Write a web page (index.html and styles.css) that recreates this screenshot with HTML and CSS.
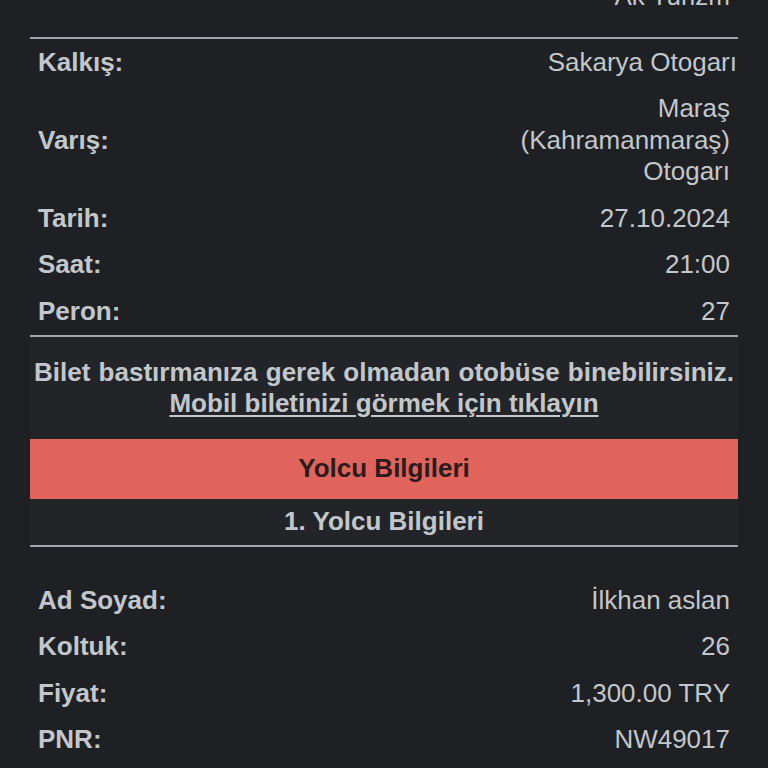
FILE: index.html
```html
<!DOCTYPE html>
<html lang="tr">
<head>
<meta charset="utf-8">
<title>Bilet</title>
<link rel="stylesheet" href="styles.css">
</head>
<body>
<div class="wrap">
  <div class="row row-top">
    <span class="label"></span>
    <span class="value">Ak Turizm</span>
  </div>
  <hr class="rule rule-first">
  <div class="row">
    <span class="label">Kalkış:</span>
    <span class="value value-wide">Sakarya Otogarı</span>
  </div>
  <div class="row">
    <span class="label">Varış:</span>
    <span class="value value-narrow">Maraş (Kahramanmaraş) Otogarı</span>
  </div>
  <div class="row">
    <span class="label">Tarih:</span>
    <span class="value">27.10.2024</span>
  </div>
  <div class="row">
    <span class="label">Saat:</span>
    <span class="value">21:00</span>
  </div>
  <div class="row">
    <span class="label">Peron:</span>
    <span class="value">27</span>
  </div>
  <hr class="rule">
  <div class="panel">
    <div class="notice">
      <p class="notice-text">Bilet bastırmanıza gerek olmadan otobüse binebilirsiniz.</p>
      <a class="notice-link" href="#">Mobil biletinizi görmek için tıklayın</a>
    </div>
    <div class="banner">Yolcu Bilgileri</div>
    <div class="subhead">1. Yolcu Bilgileri</div>
  </div>
  <hr class="rule">
  <div class="passenger">
    <div class="row">
      <span class="label">Ad Soyad:</span>
      <span class="value">İlkhan aslan</span>
    </div>
    <div class="row">
      <span class="label">Koltuk:</span>
      <span class="value">26</span>
    </div>
    <div class="row">
      <span class="label">Fiyat:</span>
      <span class="value">1,300.00 TRY</span>
    </div>
    <div class="row">
      <span class="label">PNR:</span>
      <span class="value">NW49017</span>
    </div>
  </div>
</div>
</body>
</html>
```

FILE: styles.css
```css
html, body {
  margin: 0;
  padding: 0;
  background: #1f2023;
}

body {
  font-family: "Liberation Sans", Arial, sans-serif;
  font-size: 26px;
  line-height: 31.5px;
  color: #c2c7cb;
  overflow: hidden;
  height: 768px;
}

.wrap {
  padding: 0 30px;
}

.row {
  display: flex;
  justify-content: space-between;
  align-items: center;
  padding: 7.5px 8px;
}

.row-top {
  margin-top: -26.5px;
}

.label {
  font-weight: bold;
  white-space: nowrap;
}

.value {
  text-align: right;
}

.value-wide {
  margin-right: -7px;
}

.value-narrow {
  max-width: 220px;
}

.rule {
  border: 0;
  height: 2px;
  margin: 0;
  background: #a2a6aa;
}

.rule-first {
  margin-top: 17px;
}

.panel {
  background: #232428;
}

.notice {
  padding: 20px 0 19px;
  text-align: center;
  font-weight: bold;
}

.notice-text {
  margin: 0;
  word-spacing: 1px;
}

.notice-link {
  color: #c2c7cb;
  text-decoration: underline;
  text-underline-offset: 3px;
  text-decoration-thickness: 2px;
}

.banner {
  background: #e0645c;
  color: #2a1c1c;
  font-weight: bold;
  text-align: center;
  padding: 14.75px 0 13.75px;
}

.subhead {
  text-align: center;
  font-weight: bold;
  padding: 7px 0 8px;
}

.passenger {
  padding-top: 30px;
}
```
